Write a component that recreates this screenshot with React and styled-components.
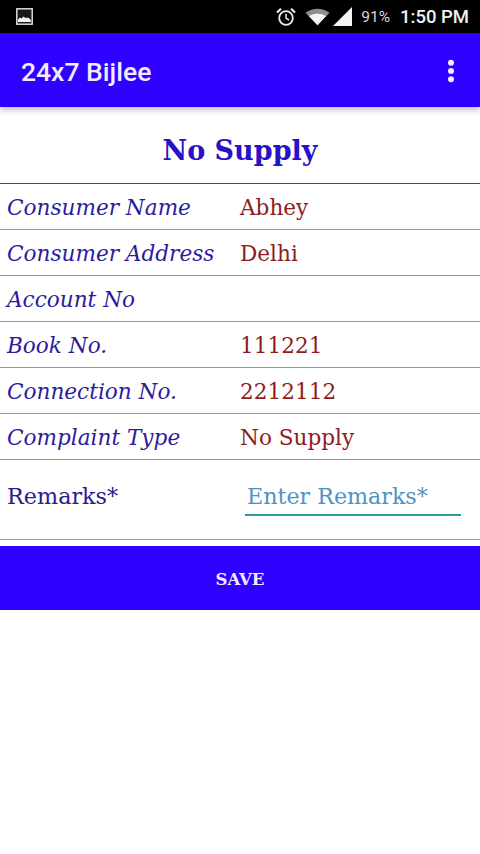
import React from 'react'
import styled, { createGlobalStyle } from 'styled-components'

const serif = `"DejaVu Serif", "Liberation Serif", serif`

const GlobalStyle = createGlobalStyle`
  html, body {
    margin: 0;
    padding: 0;
    background: #ffffff;
  }
  * {
    box-sizing: border-box;
  }
`

const Page = styled.div`
  width: 480px;
  height: 854px;
  overflow: hidden;
  background: #ffffff;
`

const StatusBar = styled.div`
  height: 33px;
  background: #000000;
  display: flex;
  align-items: center;
  padding: 0 11px 0 16px;
  color: #f2f2f2;
  font-family: Roboto, sans-serif;
`

const StatusIcons = styled.div`
  margin-left: auto;
  display: flex;
  align-items: center;
`

const Spacer = styled.span`
  width: ${(props) => props.$width}px;
`

const Battery = styled.span`
  font-size: 15.5px;
  color: #d8d8d8;
  margin: 0 10px 0 9px;
`

const Clock = styled.span`
  font-size: 18.5px;
  font-weight: 500;
`

const AppBar = styled.div`
  height: 74px;
  background: #2f00ff;
  display: flex;
  align-items: center;
  justify-content: space-between;
  padding: 2px 25px 0 21px;
  color: #f1ecff;
  box-shadow: 0 3px 6px rgba(0, 0, 0, 0.25);
  position: relative;
`

const AppTitle = styled.div`
  font-family: Roboto, sans-serif;
  font-size: 26.5px;
  font-weight: 500;
`

const Heading = styled.h1`
  margin: 0;
  height: 77px;
  padding-top: 10px;
  display: flex;
  align-items: center;
  justify-content: center;
  font-family: ${serif};
  font-size: 27px;
  font-weight: 700;
  color: #2a10c8;
  border-bottom: 1px solid #45457a;
`

const Row = styled.div`
  height: 46px;
  display: flex;
  align-items: center;
  padding: 1px 0 0 7px;
  font-family: ${serif};
  font-size: 21.6px;
  border-bottom: 1px solid #8f8fd0;
`

const Label = styled.span`
  width: 233px;
  flex: none;
  font-style: italic;
  color: #2c1c9c;
`

const Value = styled.span`
  color: #8f1c1c;
`

const RemarksRow = styled.div`
  height: 80px;
  display: flex;
  align-items: flex-start;
  padding: 22px 19px 0 7px;
  font-family: ${serif};
  border-bottom: 1px solid #a0a0b8;
`

const RemarksLabel = styled.span`
  width: 238px;
  flex: none;
  padding-top: 1px;
  font-size: 22.3px;
  color: #2c1c8c;
`

const RemarksInput = styled.input`
  width: 216px;
  height: 34px;
  border: none;
  border-bottom: 2px solid #2a9a9a;
  outline: none;
  padding: 0 0 5px 2px;
  background: transparent;
  font-family: ${serif};
  font-size: 22.2px;
  color: #3d8fc0;

  &::placeholder {
    color: #4d94c4;
    opacity: 1;
  }
`

const SaveButton = styled.button`
  display: block;
  width: 100%;
  height: 64px;
  margin-top: 6px;
  padding-top: 4px;
  border: none;
  background: #2f00ff;
  color: #f1ecff;
  font-family: ${serif};
  font-size: 16.5px;
  font-weight: 700;
`

const PictureIcon = () => (
  <svg width="17" height="17" viewBox="0 0 17 17">
    <rect x="0.8" y="0.8" width="15.4" height="15.4" fill="#1a1a1a" stroke="#e8e8e8" strokeWidth="1.4" />
    <path d="M2 14v-2.500l2-2 1.500 1 2-2 1.500 1.200h3.500l2.500 2.500V14z" fill="#f0f0f0" />
  </svg>
)

const AlarmIcon = () => (
  <svg width="20" height="20" viewBox="0 0 20 20" fill="none" stroke="#ececec">
    <circle cx="10" cy="11" r="6.800" strokeWidth="1.800" />
    <path d="M10 6.800V11.200L13 13" strokeWidth="1.500" />
    <path d="M1 5.500L5 1.800M19 5.500L15 1.800" strokeWidth="2.200" />
  </svg>
)

const WifiIcon = () => (
  <svg width="25" height="18" viewBox="0 0 26 18">
    <path d="M0.500 4.500Q13-3.500 25.500 4.500L13 17.500z" fill="#8f8f8f" />
    <path d="M4 8Q13 2.500 22 8L13 17.500z" fill="#f4f4f4" />
  </svg>
)

const SignalIcon = () => (
  <svg width="19" height="19" viewBox="0 0 19 19">
    <path d="M0 19L19 0V19z" fill="#f4f4f4" />
  </svg>
)

const MoreIcon = () => (
  <svg width="8" height="24" viewBox="0 0 8 24" fill="#f1ecff">
    <circle cx="4" cy="3.800" r="3" />
    <circle cx="4" cy="12" r="3" />
    <circle cx="4" cy="20.200" r="3" />
  </svg>
)

const rows = [
  { label: 'Consumer Name', value: 'Abhey' },
  { label: 'Consumer Address', value: 'Delhi' },
  { label: 'Account No', value: '' },
  { label: 'Book No.', value: '111221' },
  { label: 'Connection No.', value: '2212112' },
  { label: 'Complaint Type', value: 'No Supply' },
]

const App = () => {
  return (
    <Page>
      <GlobalStyle />
      <StatusBar>
        <PictureIcon />
        <StatusIcons>
          <AlarmIcon />
          <Spacer $width={9} />
          <WifiIcon />
          <Spacer $width={3} />
          <SignalIcon />
          <Battery>91%</Battery>
          <Clock>1:50 PM</Clock>
        </StatusIcons>
      </StatusBar>
      <AppBar>
        <AppTitle>24x7 Bijlee</AppTitle>
        <MoreIcon />
      </AppBar>
      <Heading>No Supply</Heading>
      {rows.map((row) => (
        <Row key={row.label}>
          <Label>{row.label}</Label>
          <Value>{row.value}</Value>
        </Row>
      ))}
      <RemarksRow>
        <RemarksLabel>Remarks*</RemarksLabel>
        <RemarksInput placeholder="Enter Remarks*" />
      </RemarksRow>
      <SaveButton>SAVE</SaveButton>
    </Page>
  )
}

export default App
